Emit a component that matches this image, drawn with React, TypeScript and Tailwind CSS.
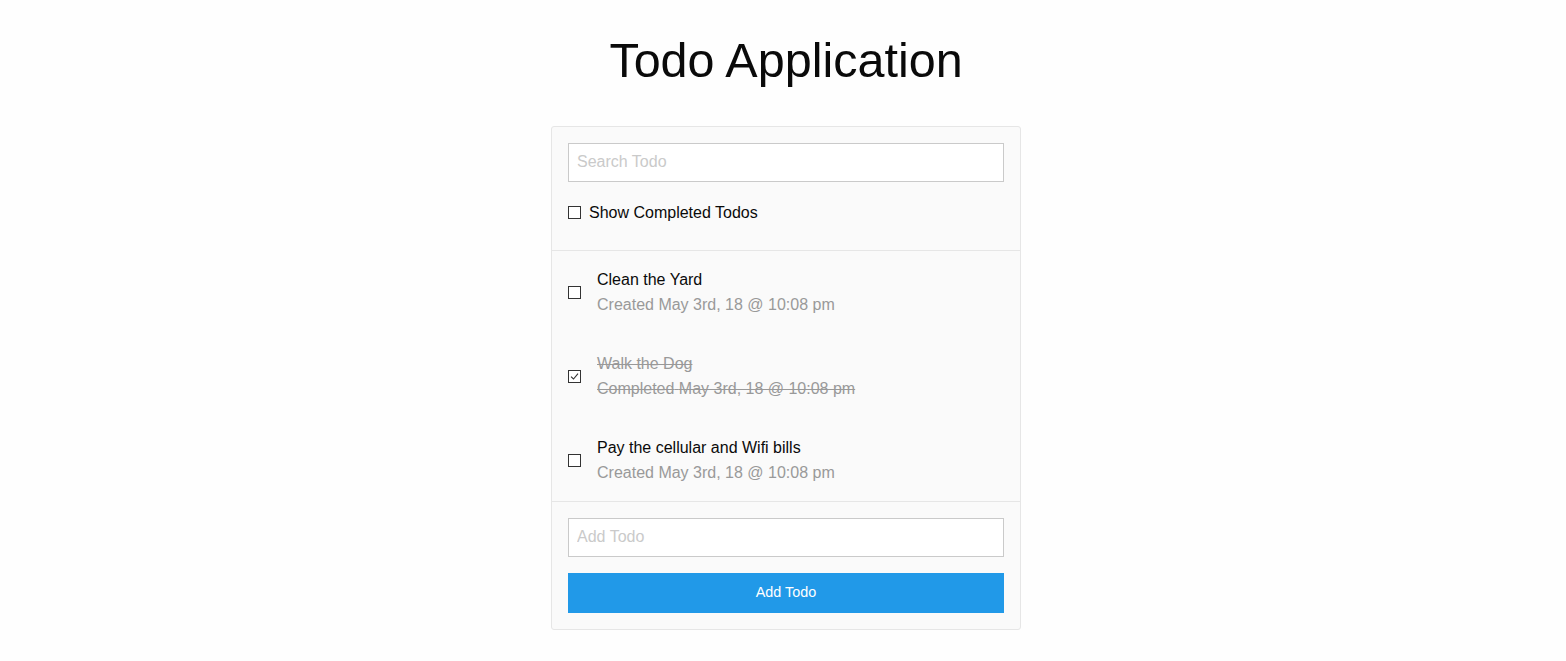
import { useState } from "react";

type Todo = { id: number; text: string; completed: boolean; stamp: string };

const initialTodos: Todo[] = [
  { id: 1, text: "Clean the Yard", completed: false, stamp: "May 3rd, 18 @ 10:08 pm" },
  { id: 2, text: "Walk the Dog", completed: true, stamp: "May 3rd, 18 @ 10:08 pm" },
  { id: 3, text: "Pay the cellular and Wifi bills", completed: false, stamp: "May 3rd, 18 @ 10:08 pm" },
];

// Small square checkbox that looks like the classic unstyled one
const Box = ({ checked }: { checked: boolean }) => (
  <span className="flex h-[13px] w-[13px] shrink-0 items-center justify-center border border-[#333] bg-white">
    {checked && (
      <svg width="9" height="9" viewBox="0 0 9 9" fill="none">
        <path d="M1 4.6 L3.5 7 L8 1.6" stroke="#333" strokeWidth="1.1" />
      </svg>
    )}
  </span>
);

export default function App() {
  const [todos, setTodos] = useState(initialTodos);
  const [showCompleted, setShowCompleted] = useState(false);

  const toggle = (id: number) =>
    setTodos((list) => list.map((t) => (t.id === id ? { ...t, completed: !t.completed } : t)));

  return (
    <div className="min-h-[661px] bg-[#fefefe] pt-[36px] pl-[6px] font-['Liberation_Sans',Arial,sans-serif] text-[#0a0a0a]">
      <h1 className="text-center text-[48.5px] leading-none">Todo Application</h1>

      <div className="mx-auto mt-[41px] w-[470px] rounded-[3px] border border-[#e6e6e6] bg-[#fafafa]">
        {/* search */}
        <div className="border-b border-[#e6e6e6] px-4 pt-4 pb-[23px]">
          <input
            type="text"
            placeholder="Search Todo"
            className="block h-[39px] w-full border border-[#cacaca] bg-white px-2 text-[16px] outline-none placeholder:text-[#cacaca]"
          />
          <label
            className="mt-[17px] flex h-[28px] cursor-pointer items-center gap-2 text-[16px]"
            onClick={() => setShowCompleted(!showCompleted)}
          >
            <Box checked={showCompleted} />
            Show Completed Todos
          </label>
        </div>

        {/* list */}
        <div className="border-b border-[#e6e6e6]">
          {todos.map((todo) => (
            <div
              key={todo.id}
              className="flex cursor-pointer items-center gap-4 px-4 pt-[17px] pb-[17px] last:pb-[15px]"
              onClick={() => toggle(todo.id)}
            >
              <Box checked={todo.completed} />
              <div className={todo.completed ? "text-[#999] line-through" : ""}>
                <p className="text-[16px] leading-[24px]">{todo.text}</p>
                <p className="text-[16px] leading-[26px] text-[#999]">
                  {todo.completed ? "Completed" : "Created"} {todo.stamp}
                </p>
              </div>
            </div>
          ))}
        </div>

        {/* add */}
        <div className="p-4">
          <input
            type="text"
            placeholder="Add Todo"
            className="block h-[39px] w-full border border-[#cacaca] bg-white px-2 text-[16px] outline-none placeholder:text-[#cacaca]"
          />
          <button className="mt-4 block h-[40px] w-full bg-[#2199e8] text-[14.4px] text-white">
            Add Todo
          </button>
        </div>
      </div>
    </div>
  );
}
